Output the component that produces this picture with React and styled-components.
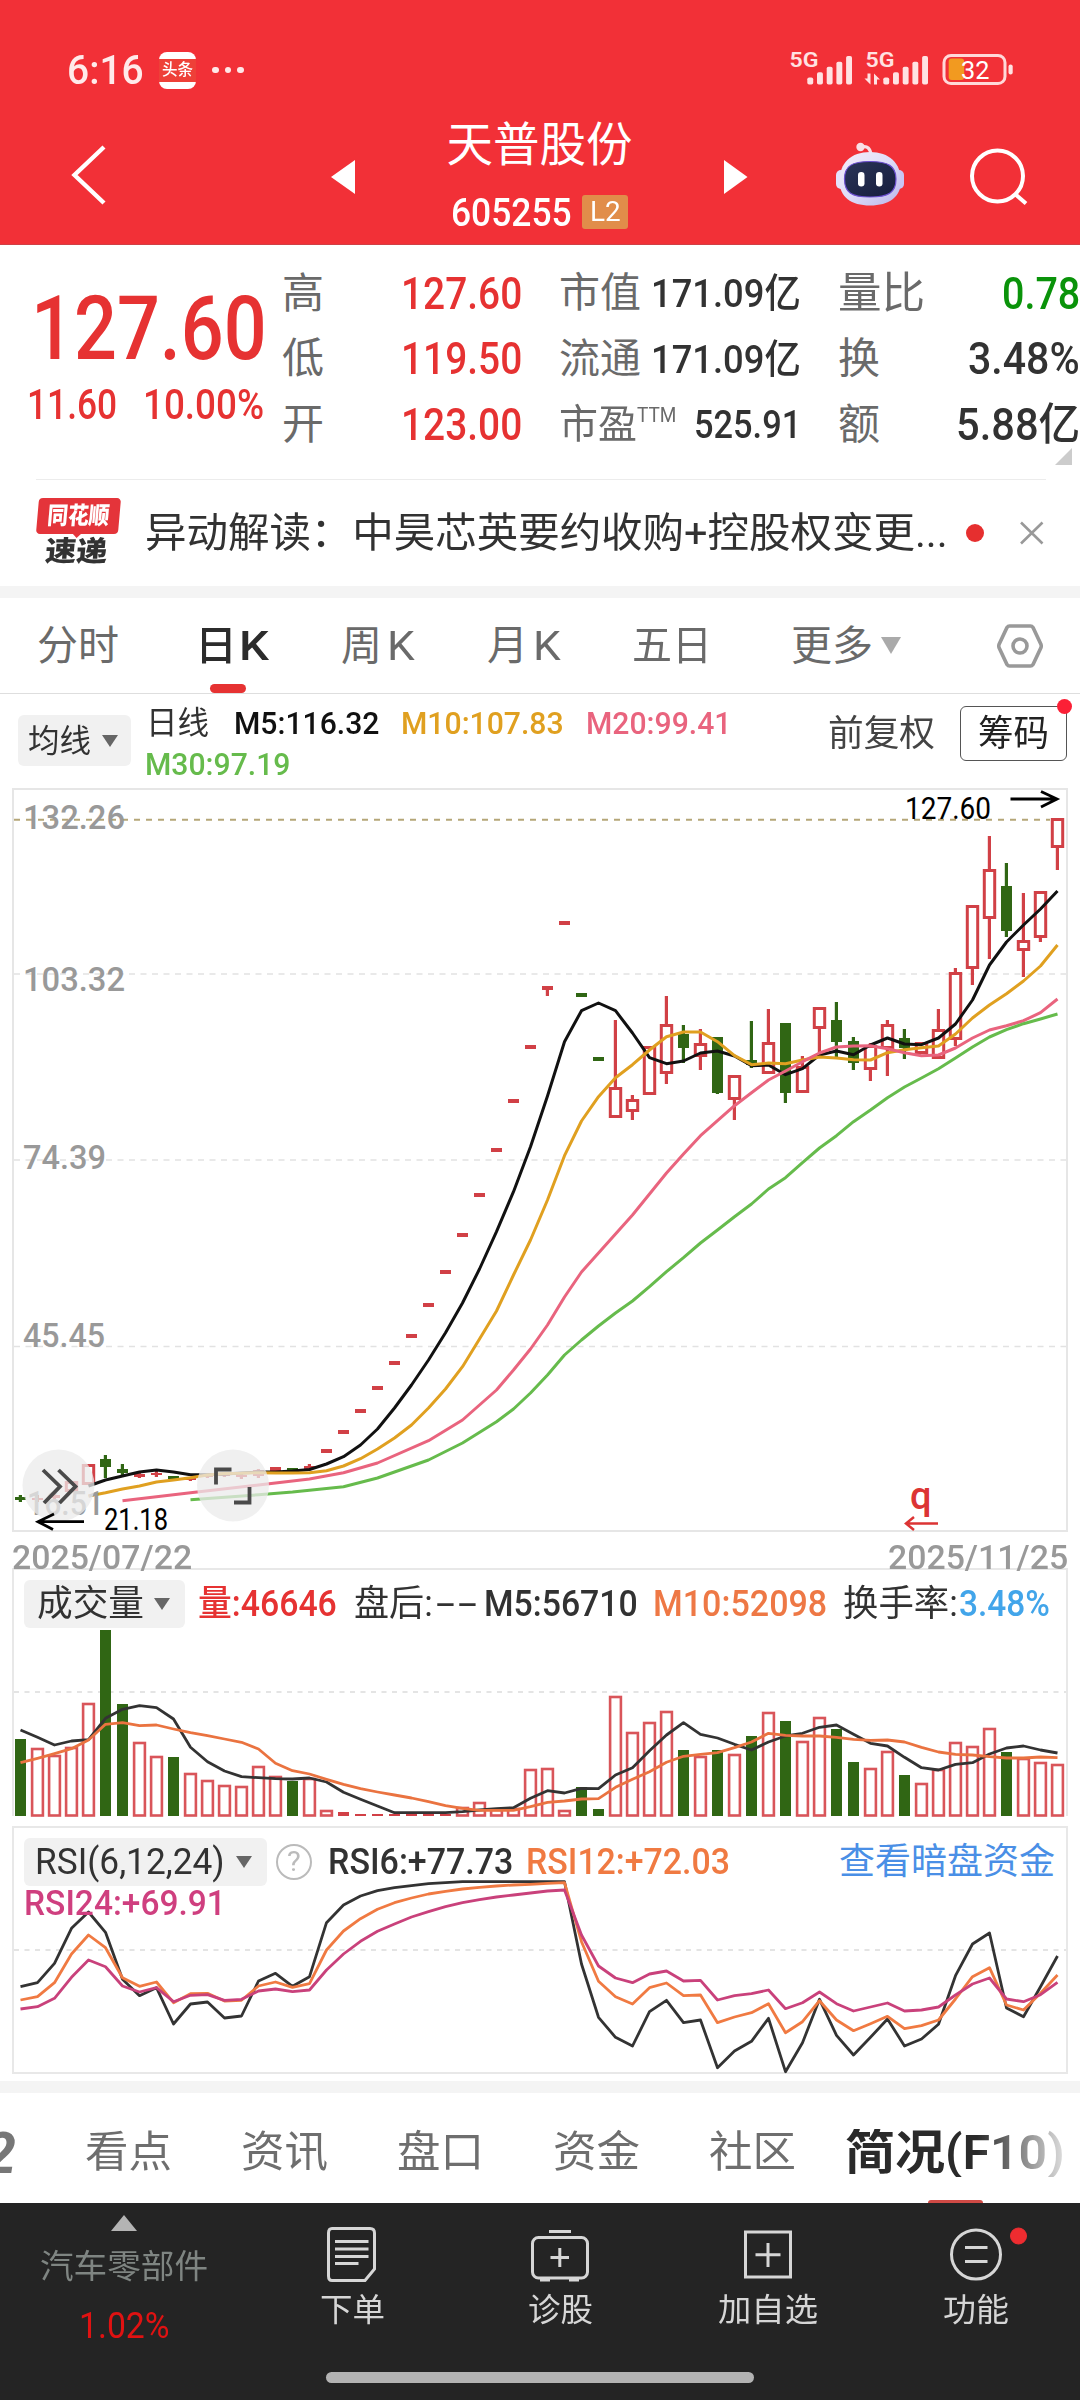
import { useLayoutEffect, useRef, useState } from "react";
import styled, { createGlobalStyle } from "styled-components";

const RED = "#e63232";
const CANDLE_RED = "#d14046";
const CANDLE_GREEN = "#306614";
const FONT = 'Roboto, "Noto Sans CJK SC", sans-serif';

const GlobalStyle = createGlobalStyle`
  body {
    margin: 0;
    background: #fff;
    font-family: ${FONT};
    color: #323232;
  }

  * {
    box-sizing: border-box;
  }
`;

const FitBox = styled.span`
  display: block;
  flex: none;
  width: ${(p) => p.$w}px;
  height: ${(p) => p.$size}px;
  margin-left: ${(p) => p.$ml || 0}px;
  font-size: ${(p) => p.$size}px;
  font-weight: ${(p) => p.$weight || 400};
  color: ${(p) => p.$color || "inherit"};
  line-height: 1;
  white-space: nowrap;
`;

const FitInner = styled.span`
  display: inline-block;
  transform-origin: left center;
`;

// Squeezes a run of text into a fixed width, like the narrow quote font does
function Fit({ w, size, ml, weight, color, children }) {
  const ref = useRef(null);
  const [scale, setScale] = useState(1);

  useLayoutEffect(() => {
    const el = ref.current;
    if (el && el.offsetWidth) setScale(w / el.offsetWidth);
  }, [w, size, weight, children]);

  return (
    <FitBox $w={w} $size={size} $ml={ml} $weight={weight} $color={color}>
      <FitInner ref={ref} style={{ transform: `scaleX(${scale})` }}>
        {children}
      </FitInner>
    </FitBox>
  );
}

const Page = styled.div`
  width: 1080px;
  height: 2400px;
  display: flex;
  flex-direction: column;
  overflow: hidden;
  background: #fff;
`;

/* ---------- header ---------- */

const Header = styled.header`
  height: 245px;
  flex: none;
  background: #f23037;
  border-bottom: 1px solid #d04046;
  color: #fff;
`;

const StatusBar = styled.div`
  display: flex;
  align-items: center;
  height: 110px;
  padding: 30px 64px 0 67px;
`;

const AppBadge = styled.div`
  width: 37px;
  height: 37px;
  margin-left: 15px;
  padding: 7px 0 7px;
  border-radius: 8px;
  background: #fff;
`;

const AppBadgeText = styled.div`
  display: flex;
  justify-content: center;
  align-items: center;
  height: 23px;
  background: #ee4038;
`;

const Dots = styled.div`
  display: flex;
  gap: 6px;
  margin-left: 16px;

  i {
    width: 6.5px;
    height: 6.5px;
    border-radius: 50%;
    background: #ffe8e8;
  }
`;

const StatusIcons = styled.svg`
  margin-left: auto;
`;

const NavBar = styled.div`
  display: flex;
  height: 134px;

  > svg {
    flex: none;
  }
`;

const TitleBlock = styled.div`
  display: flex;
  flex-direction: column;
  align-items: center;
  width: 369px;
  padding-top: 12px;
`;

const CodeRow = styled.div`
  display: flex;
  align-items: center;
  margin-top: 24px;
`;

const LevelTag = styled.div`
  display: flex;
  align-items: center;
  justify-content: center;
  width: 46px;
  height: 34px;
  margin-left: 10px;
  border-radius: 3px;
  background: #e18d4a;
`;

function Robot() {
  return (
    <svg width="72" height="134" viewBox="834 110 72 134">
      <defs>
        <linearGradient id="shell" x1="0" y1="0" x2="1" y2="1">
          <stop offset="0" stopColor="#f6eef8" />
          <stop offset="0.5" stopColor="#dfdcf8" />
          <stop offset="1" stopColor="#b9b4ea" />
        </linearGradient>
        <linearGradient id="visor" x1="0" y1="0" x2="1" y2="1">
          <stop offset="0" stopColor="#2b3558" />
          <stop offset="1" stopColor="#161c3c" />
        </linearGradient>
      </defs>
      <path d="M862 147 Q870 145 871 155" fill="none" stroke="#f7dfe8" strokeWidth="3.2" />
      <circle cx="860.5" cy="147" r="4.2" fill="#f9dfe6" />
      <rect x="836" y="170" width="10" height="19" rx="5" fill="#e4e2fb" />
      <rect x="894" y="170" width="10" height="19" rx="5" fill="#c9c5f4" />
      <path d="M870 152C889 152 901 163 901 181C901 197 889 205.500 870 205.500C851 205.500 839.500 197 839.500 181C839.500 163 851 152 870 152Z" fill="url(#shell)" />
      <path d="M870 161.500C888 161.500 896 166 896 179C896 193 888 197 870 197C852 197 844.500 193 844.500 179C844.500 166 852 161.500 870 161.500Z" fill="url(#visor)" stroke="#6c4fd0" strokeWidth="1.2" />
      <rect x="858" y="172" width="6.5" height="14.5" rx="3.2" fill="#fff" />
      <rect x="876" y="172" width="6.5" height="14.5" rx="3.2" fill="#fff" />
    </svg>
  );
}

function SignalBars({ x }) {
  return [77.5, 72.3, 66.7, 61.7, 56].map((top, i) => (
    <rect key={top} x={x + i * 9.7} y={top} width="5.9" height={84.5 - top} rx="1.8" />
  ));
}

/* ---------- quote ---------- */

const Quote = styled.section`
  display: grid;
  grid-template-columns: 282px 240px 279px 279px;
  height: 234px;
  flex: none;
  position: relative;
  padding-top: 16px;
`;

const PriceCol = styled.div`
  padding: 23px 0 0 27px;
`;

const BigPrice = styled.div`
  padding-left: 4px;
`;

const ChangeRow = styled.div`
  display: flex;
  margin-top: 11px;
`;

const StatCol = styled.div`
  display: grid;
  grid-auto-rows: 65.5px;
  padding-left: ${(p) => p.$pad || 0}px;
`;

const Stat = styled.div`
  display: flex;
  justify-content: space-between;
  align-items: center;
  color: #323232;

  > :first-child {
    color: #6a6a6a;
  }
`;

const LabelGroup = styled.div`
  display: flex;
  align-items: flex-start;
`;

const Corner = styled.i`
  position: absolute;
  right: 8px;
  bottom: 14px;
  border-left: 17px solid transparent;
  border-bottom: 17px solid #ccc;
`;

const NewsRow = styled.section`
  display: flex;
  align-items: center;
  height: 107px;
  flex: none;
  margin: 0 34px 0 36px;
  border-top: 1px solid #ececec;

  > svg {
    flex: none;
  }
`;

const NewsLogo = styled.div`
  width: 82px;
  height: 70px;
  margin-top: -1px;
  transform: skewX(-5deg);
`;

const NewsLogoTop = styled.div`
  display: flex;
  justify-content: center;
  align-items: center;
  height: 36px;
  border-radius: 4px;
  background: #e4343a;
  color: #fff;
`;

const NewsLogoTail = styled.i`
  display: block;
  width: 0;
  margin: -1px auto 0;
  border: 5px solid transparent;
  border-top-color: #e4343a;
  border-bottom: 0;
`;

const NewsDot = styled.i`
  flex: none;
  width: 18px;
  height: 18px;
  margin-left: 18px;
  border-radius: 50%;
  background: #e62f2f;
`;

const Band = styled.div`
  height: 12px;
  flex: none;
  background: #f4f4f4;
`;

const SpacedBand = styled(Band)`
  margin-top: 7px;
`;

/* ---------- period tabs ---------- */

const PeriodTabs = styled.nav`
  display: flex;
  align-items: center;
  height: 96px;
  flex: none;
  padding-left: 37px;
  border-bottom: 1px solid #dedede;
  color: #6a6a6a;

  > svg {
    flex: none;
  }
`;

const PeriodTab = styled.div`
  display: flex;
  position: relative;
  padding-top: 1px;
  margin-left: ${(p) => p.$ml || 0}px;
  color: ${(p) => (p.$active ? "#2c2c2c" : "inherit")};

  &::after {
    content: "";
    display: ${(p) => (p.$active ? "block" : "none")};
    position: absolute;
    left: 15px;
    top: 59px;
    width: 36px;
    height: 9px;
    border-radius: 5px;
    background: #e63232;
  }
`;

const Caret = styled.i`
  flex: none;
  width: 0;
  margin-left: ${(p) => p.$ml}px;
  border: ${(p) => p.$half || 8.5}px solid transparent;
  border-top: ${(p) => p.$h || 12}px solid ${(p) => p.$color || "#666"};
  border-bottom: 0;
`;

const MaRow = styled.div`
  display: flex;
  height: 94px;
  flex: none;
  padding-left: 18px;
`;

const Picker = styled.div`
  display: flex;
  align-items: center;
  flex: none;
  width: ${(p) => p.$w}px;
  height: ${(p) => p.$h}px;
  margin-top: ${(p) => p.$mt || 0}px;
  border-radius: 6px;
  background: #f1f1f1;
`;

const MaLegend = styled.div`
  width: 681px;
  flex: none;
  padding: 13px 0 0 15px;
`;

const LegendLine = styled.div`
  display: flex;
  height: 41px;
`;

const MaActions = styled.div`
  display: flex;
`;

const AdjustLabel = styled.div`
  margin: 22px 0 0 16px;
`;

const ChipButton = styled.div`
  position: relative;
  display: flex;
  align-items: center;
  justify-content: center;
  width: 107px;
  height: 55px;
  margin: 12px 0 0 25px;
  border: 1.5px solid #555;
  border-radius: 6px;
  color: #222;

  &::after {
    content: "";
    position: absolute;
    right: -6px;
    top: -8px;
    width: 15px;
    height: 15px;
    border-radius: 50%;
    background: #fb2036;
  }
`;

/* ---------- charts ---------- */

const ChartPanel = styled.section`
  display: grid;
  height: ${(p) => p.$h}px;
  flex: none;

  > * {
    grid-area: 1 / 1;
  }

  polyline {
    fill: none;
    stroke-linejoin: round;
  }
`;

const DateRow = styled.div`
  display: flex;
  justify-content: space-between;
  align-items: center;
  height: 36px;
  flex: none;
  padding: 14px 12px 0;
  color: #999;
  z-index: 1;
`;

const PanelLegend = styled.div`
  padding: 12px 0 0 24px;
`;

const PanelLegendRow = styled.div`
  display: flex;
  align-items: center;
`;

const Help = styled.div`
  display: flex;
  align-items: center;
  justify-content: center;
  width: 36px;
  height: 36px;
  margin-left: 9px;
  border: 2.5px solid #bbb;
  border-radius: 50%;
`;

const xAt = (i) => 20.5 + i * 17;

const line = (points) => points.map(([i, y]) => `${xAt(i)},${y}`).join(" ");
const series = (ys, base) => ys.map((v, i) => `${xAt(i)},${(base + v / 3).toFixed(1)}`).join(" ");

// [up, body top, body bottom, wick top, wick bottom]
const candles = [
  [0, 1497, 1500, 1495, 1502], [1, 1498, 1500, 1495, 1502], [1, 1495, 1498, 1493, 1501],
  [1, 1481, 1492, 1481, 1492], [1, 1464, 1485, 1464, 1485], [0, 1459, 1467, 1455, 1478],
  [0, 1469, 1473, 1464, 1475], [1, 1474, 1477, 1472, 1478], [1, 1473, 1475, 1469, 1477],
  [0, 1476, 1479, 1476, 1479], [1, 1477, 1480, 1477, 1481], [1, 1475, 1477, 1474, 1478],
  [1, 1474, 1476, 1474, 1477], [1, 1475, 1477, 1474, 1479], [1, 1470, 1476, 1469, 1478],
  [1, 1467, 1471, 1467, 1471], [0, 1468, 1471, 1468, 1471], [1, 1466, 1469, 1464, 1470],
  [1, 1449, 1453], [1, 1430, 1434], [1, 1409, 1413], [1, 1386, 1390], [1, 1361, 1365],
  [1, 1334, 1338], [1, 1303, 1307], [1, 1270, 1274], [1, 1233, 1237], [1, 1193, 1197],
  [1, 1148, 1152], [1, 1099, 1103], [1, 1045, 1049], [1, 986, 990, 986, 996],
  [1, 921, 925], [0, 993, 997], [0, 1057, 1061],
  [1, 1087, 1118, 1020, 1118], [1, 1099, 1112, 1095, 1120], [1, 1046, 1095, 1046, 1095],
  [1, 1024, 1074, 996, 1084], [0, 1034, 1048, 1025, 1063], [1, 1043, 1057, 1029, 1070],
  [0, 1037, 1093, 1037, 1094], [1, 1075, 1100, 1075, 1120], [0, 1060, 1065, 1021, 1068],
  [1, 1042, 1074, 1009, 1074], [0, 1023, 1093, 1023, 1103], [1, 1066, 1093, 1056, 1093],
  [1, 1007, 1029, 1007, 1057], [0, 1020, 1042, 1002, 1057], [0, 1041, 1063, 1037, 1070],
  [1, 1045, 1070, 1043, 1081], [1, 1024, 1049, 1020, 1076], [0, 1038, 1048, 1029, 1059],
  [1, 1042, 1054, 1042, 1054], [1, 1029, 1059, 1009, 1059], [1, 972, 1040, 968, 1046],
  [1, 905, 969, 905, 985], [1, 869, 919, 836, 959], [0, 886, 931, 863, 937],
  [1, 940, 951, 893, 977], [1, 891, 938, 891, 942], [1, 818, 848, 818, 870],
];

const ma5 = [
  1486, 1480, 1476, 1472, 1470, 1472, 1474.7, 1474.7, 1474, 1473, 1472, 1472, 1471, 1469.5, 1464,
  1456.7, 1445, 1429, 1408, 1385, 1360, 1332.7, 1303, 1269, 1231.7, 1191.7, 1146.7, 1096, 1041.7,
  1010.7, 1003, 1010.7, 1033, 1057.7, 1063.7, 1061, 1053, 1051, 1056, 1065.7, 1065, 1074.7, 1068.7,
  1055, 1051, 1054.7, 1045, 1038, 1044, 1044.7, 1038, 1024, 1000, 965, 942, 925, 909, 891,
].map((y, k) => [k + 4, y]);

const ma10 = [
  1496, 1492.7, 1489, 1486, 1482, 1480, 1477.7, 1475, 1473.5, 1473.3, 1472.7, 1473, 1473, 1472.7,
  1470.7, 1466, 1458.7, 1449, 1438, 1425, 1408, 1389, 1366.7, 1339, 1311, 1275, 1240, 1200, 1155.7,
  1121, 1096.7, 1077.7, 1064.7, 1050, 1036.7, 1032, 1032, 1041.7, 1055.7, 1064.7, 1063, 1063.7,
  1060, 1057, 1058, 1059.7, 1060, 1052.7, 1049.7, 1047.7, 1046, 1034, 1018, 1005, 993.7, 981, 966,
  945,
].map((y, k) => [k + 4, y]);

const ma20 = [
  [6, 1500.7], [10, 1492.7], [14, 1485], [17, 1479], [19, 1472.7], [21, 1463], [24, 1440.7],
  [26, 1420], [27, 1405], [28, 1390], [29, 1370], [30, 1349], [31, 1325], [32, 1297], [33, 1272],
  [34, 1253], [35, 1234], [36, 1215], [37, 1194], [38, 1173], [39, 1154], [40, 1135.7],
  [41, 1120.7], [42, 1105.7], [43, 1092.7], [44, 1080], [45, 1071], [46, 1061.7], [47, 1053],
  [48, 1047], [49, 1046], [50, 1045.7], [51, 1048.7], [52, 1052.7], [53, 1055.7], [54, 1055],
  [55, 1048], [56, 1038], [57, 1030], [58, 1025.7], [59, 1020.7], [60, 1012.7], [61, 999],
];

const ma30 = [
  [10, 1499.7], [14, 1494.7], [16, 1492], [19, 1486.7], [21, 1478], [24, 1460], [26, 1443],
  [28, 1421.7], [29, 1409], [30, 1393], [31, 1375], [32, 1355], [33, 1340], [34, 1326], [35, 1313],
  [36, 1301], [37, 1286.7], [38, 1271.7], [39, 1257.7], [40, 1243], [41, 1230], [42, 1216.7],
  [43, 1204], [44, 1189], [45, 1177.7], [46, 1162.7], [47, 1148], [48, 1135.7], [49, 1121.7],
  [50, 1110], [51, 1097.7], [52, 1087], [53, 1078], [54, 1068.7], [55, 1058], [56, 1047],
  [57, 1037], [58, 1029.7], [59, 1023.7], [60, 1019], [61, 1014],
];

const volumeTops = [
  1740, 1749, 1756, 1748, 1704, 1631, 1705, 1743, 1757, 1758, 1774, 1781, 1786, 1787, 1767, 1777,
  1782, 1779, 1811, 1813, 1815, 1815, 1815, 1815, 1815, 1815, 1808, 1803, 1810, 1809, 1770, 1769,
  1811, 1788, 1810, 1697, 1733, 1723, 1712, 1751, 1757, 1751, 1755, 1737, 1713, 1722, 1742, 1718,
  1730, 1763, 1769, 1752, 1776, 1784, 1770, 1743, 1747, 1729, 1753, 1759, 1763, 1765,
];

const volMa5 = [
  570, 592, 615, 603, 599, 535, 508, 497, 503, 537, 622, 665, 693, 710, 713, 716, 717, 714, 726,
  757, 778, 798, 818, 818, 818, 818, 815, 810, 806, 803, 775, 752, 759, 745, 746, 705, 683, 632,
  585, 548, 583, 594, 613, 630, 606, 588, 580, 562, 555, 583, 610, 618, 652, 683, 690, 673, 668,
  642, 624, 618, 630, 639,
];

const volMa10 = [
  668, 655, 641, 626, 600, 553, 548, 557, 555, 567, 578, 587, 597, 607, 627, 670, 692, 702, 718,
  733, 746, 756, 765, 774, 785, 797, 805, 811, 811, 811, 800, 787, 783, 777, 776, 742, 718, 695,
  667, 649, 643, 638, 623, 606, 580, 586, 588, 588, 592, 598, 601, 600, 606, 622, 636, 643, 645,
  650, 654, 654, 651, 653,
];

const rsi6 = [
  500, 488, 430, 325, 276, 337, 478, 527, 503, 612, 552, 546, 594, 588, 483, 460, 499, 470, 308,
  255, 228, 212, 203, 197, 191, 188, 185, 185, 185, 185, 185, 185, 185, 432, 592, 652, 678, 575,
  541, 608, 600, 743, 693, 664, 595, 755, 668, 538, 646, 705, 652, 597, 678, 657, 613, 467, 372,
  339, 564, 590, 500, 408,
];

const rsi12 = [
  540, 530, 488, 402, 345, 383, 473, 499, 486, 548, 521, 520, 543, 541, 498, 486, 502, 491, 390,
  333, 296, 268, 248, 234, 222, 214, 207, 202, 198, 195, 193, 190, 188, 365, 484, 530, 552, 503,
  489, 527, 525, 608, 591, 578, 551, 638, 605, 542, 600, 632, 611, 589, 626, 617, 600, 537, 470,
  443, 555, 570, 520, 465,
];

const rsi24 = [
  567, 560, 535, 472, 420, 440, 498, 516, 503, 545, 526, 524, 541, 538, 513, 507, 515, 510, 450,
  402, 364, 334, 312, 291, 275, 260, 248, 239, 231, 225, 219, 213, 210, 345, 438, 474, 488, 462,
  453, 483, 481, 540, 527, 521, 510, 566, 548, 516, 551, 573, 561, 549, 573, 570, 561, 525, 492,
  474, 537, 545, 524, 487,
];

function Candle({ x, data }) {
  const [up, top, bottom, wickTop, wickBottom] = data;
  const color = up ? CANDLE_RED : CANDLE_GREEN;
  const flat = bottom - top < 8;
  return (
    <g>
      {wickTop !== undefined && wickTop < top && (
        <rect x={x - 1.7} y={wickTop} width="3.2" height={top - wickTop} fill={color} />
      )}
      {wickBottom !== undefined && wickBottom > bottom && (
        <rect x={x - 1.7} y={bottom} width="3.2" height={wickBottom - bottom} fill={color} />
      )}
      {up && !flat ? (
        <rect x={x - 5.2} y={top + 1.5} width="10.4" height={bottom - top - 3} fill="none" stroke={color} strokeWidth="3" />
      ) : (
        <rect x={x - 5.5} y={top} width="11" height={bottom - top} fill={color} />
      )}
    </g>
  );
}

function AxisText({ x, y, w, children }) {
  return (
    <text x={x} y={y} fontSize="34" fontWeight="500" fill="#999" textLength={w} lengthAdjust="spacingAndGlyphs">
      {children}
    </text>
  );
}

function KLineChart() {
  return (
    <svg width="1080" height="744" viewBox="0 788 1080 744" fontFamily={FONT}>
      <rect x="13" y="789" width="1054" height="742" fill="none" stroke="#e6e6e6" strokeWidth="2" />
      {[974, 1160, 1346.5].map((y) => (
        <path key={y} d={`M14 ${y}H1066`} stroke="#e2e2e2" strokeWidth="1.5" strokeDasharray="6 5.5" />
      ))}
      <path d="M14 819.8H1050" stroke="#b5a678" strokeWidth="2" strokeDasharray="6 6" />
      {candles.map((c, i) => (
        <Candle key={i} x={xAt(i)} data={c} />
      ))}
      <g strokeWidth="3">
        <polyline points={line(ma5)} stroke="#111" />
        <polyline points={line(ma10)} stroke="#e0a020" />
        <polyline points={line(ma20)} stroke="#e9647e" />
        <polyline points={line(ma30)} stroke="#66bb4c" />
      </g>
      <AxisText x={23} y={829} w={102}>132.26</AxisText>
      <AxisText x={23} y={991} w={102}>103.32</AxisText>
      <AxisText x={23} y={1169} w={83}>74.39</AxisText>
      <AxisText x={23} y={1347} w={82}>45.45</AxisText>
      <AxisText x={27} y={1515} w={77}>16.51</AxisText>
      <g fill="#ebebeb" fillOpacity="0.75">
        <circle cx="58.5" cy="1485.5" r="36" />
        <circle cx="233" cy="1485.5" r="36" />
      </g>
      <g fill="none" stroke="#4a4a4a" strokeWidth="3.8">
        <path d="M43 1470L60 1486.5L44 1503M58.5 1470L75.5 1486.5L59.5 1503" />
        <path d="M216 1484.5V1469.5H231.5M249.5 1487V1502.5H234" />
      </g>
      <g fill="none" stroke="#000" strokeWidth="2.8">
        <path d="M1010.5 799H1057M1041 791.5L1057 799L1041 807" />
        <path d="M84 1521.7H38M54 1514L38 1521.7L53 1529.5" />
      </g>
      <text x="905" y="819" fontSize="31" textLength="86" lengthAdjust="spacingAndGlyphs">127.60</text>
      <text x="104" y="1529.5" fontSize="31" textLength="64" lengthAdjust="spacingAndGlyphs">21.18</text>
      <text x="910" y="1509" fontSize="38" fontWeight="500" fill="#dc3434">q</text>
      <path d="M938 1523.5H906M914 1517L906 1523.5L914 1530" fill="none" stroke="#dc3434" strokeWidth="2.5" />
    </svg>
  );
}

function VolumeChart() {
  return (
    <svg width="1080" height="258" viewBox="0 1568 1080 258">
      <path d="M13 1816V1569H1067V1816" fill="none" stroke="#e8e8e8" strokeWidth="2" />
      <path d="M14 1692H1066" stroke="#e4e4e4" strokeWidth="2" strokeDasharray="5 5.5" />
      {volumeTops.map((top, i) => {
        const x = xAt(i);
        const up = candles[i][0];
        if (up && top < 1812) {
          return (
            <rect key={i} x={x - 5.4} y={top} width="10.8" height={1815.5 - top} fill="none" stroke="#d9555a" strokeWidth="2.6" />
          );
        }
        return <rect key={i} x={x - 5.5} y={top - 1} width="11" height={1817 - top} fill={up ? CANDLE_RED : CANDLE_GREEN} />;
      })}
      <g strokeWidth="2.8">
        <polyline points={series(volMa5, 1540)} stroke="#333" />
        <polyline points={series(volMa10, 1540)} stroke="#ea7340" />
      </g>
    </svg>
  );
}

function RsiChart() {
  return (
    <svg width="1080" height="248" viewBox="0 1826 1080 248">
      <rect x="13" y="1827" width="1054" height="246" fill="none" stroke="#e8e8e8" strokeWidth="2" />
      <path d="M14 1950H1066" stroke="#e4e4e4" strokeWidth="2" strokeDasharray="5 5.5" />
      <g strokeWidth="2.8">
        <polyline points={series(rsi6, 1820)} stroke="#333" />
        <polyline points={series(rsi12, 1820)} stroke="#f07a42" />
        <polyline points={series(rsi24, 1820)} stroke="#c9417b" />
      </g>
    </svg>
  );
}

/* ---------- bottom ---------- */

const SubTabs = styled.nav`
  display: flex;
  align-items: center;
  position: relative;
  height: 110px;
  flex: none;
  padding-top: 9px;
  color: #6e6e6e;
`;

const CutTab = styled.div`
  display: flex;
  justify-content: flex-end;
  width: 16px;
  height: 58px;
  overflow: hidden;
  font-size: 58px;
  font-weight: 700;
  font-style: italic;
  line-height: 1;
  color: #777;
`;

const ActiveSubTab = styled.div`
  margin-left: 49px;
  color: #2a2a2a;
  mask-image: linear-gradient(90deg, #000 60%, rgba(0, 0, 0, 0.15) 100%);
`;

const SubTabMark = styled.i`
  position: absolute;
  left: 928px;
  bottom: 0;
  width: 55px;
  height: 3px;
  border-radius: 3px 3px 0 0;
  background: #d04a45;
`;

const BottomBar = styled.footer`
  display: flex;
  flex-direction: column;
  height: 197px;
  flex: none;
  background: #242424;
  color: #d6d6d6;
`;

const BottomItems = styled.div`
  display: grid;
  grid-template-columns: 248px 208px 208px 208px 208px;
  height: 169px;
`;

const SectorItem = styled.div`
  display: flex;
  flex-direction: column;
  align-items: center;
  padding-top: 12px;
`;

const SectorArrow = styled.i`
  width: 0;
  border: 13.5px solid transparent;
  border-bottom: 16px solid #b4b4b4;
  border-top: 0;
`;

const SectorName = styled.div`
  margin: 19px 0 25px;
`;

const BottomItem = styled.div`
  display: flex;
  flex-direction: column;
  align-items: center;
  gap: 8px;
  padding-top: 19px;

  svg {
    fill: none;
    stroke: #d6d6d6;
    stroke-width: 3;
  }
`;

const HomeBar = styled.i`
  width: 428px;
  height: 11px;
  margin: 0 auto;
  border-radius: 6px;
  background: #b3b3b3;
`;

export default function App() {
  return (
    <Page>
      <GlobalStyle />

      <Header>
        <StatusBar>
          <Fit w={77} size={41} weight={500} color="#ffeaea">6:16</Fit>
          <AppBadge>
            <AppBadgeText>
              <Fit w={31} size={16} weight={500}>头条</Fit>
            </AppBadgeText>
          </AppBadge>
          <Dots>
            <i />
            <i />
            <i />
          </Dots>
          <StatusIcons width="228" height="60" viewBox="788 40 228 60" fill="#ffe2e2" fontFamily={FONT}>
            <text x="789.5" y="67" fontSize="21" fontWeight="600" textLength="29" lengthAdjust="spacingAndGlyphs">5G</text>
            <SignalBars x={807.3} />
            <text x="865.5" y="67" fontSize="21" fontWeight="600" textLength="29" lengthAdjust="spacingAndGlyphs">5G</text>
            <path d="M870.5 73.5V84.5L864.5 78.5H867.5V73.5ZM874 84.5V73.5L880 79.5H877V84.5Z" />
            <SignalBars x={883.3} />
            <rect x="944" y="55.5" width="61" height="28" rx="7" fill="none" stroke="#ffd9d9" strokeWidth="3" />
            <rect x="948.7" y="58.5" width="15.5" height="21.5" rx="3" fill="#f29a20" />
            <rect x="1008.5" y="64.5" width="4.2" height="10" rx="2" />
            <text x="961" y="79.2" fontSize="26.5" fill="#fff" textLength="28.5" lengthAdjust="spacingAndGlyphs">32</text>
          </StatusIcons>
        </StatusBar>
        <NavBar>
          <svg width="355" height="134" viewBox="0 110 355 134">
            <path d="M104 147L74.5 175L104 203" fill="none" stroke="#fff" strokeWidth="4.4" />
            <path d="M355 160V194L331 177Z" fill="#fff" />
          </svg>
          <TitleBlock>
            <Fit w={186} size={46.5}>天普股份</Fit>
            <CodeRow>
              <Fit w={121} size={39.5} weight={500}>605255</Fit>
              <LevelTag>
                <Fit w={31} size={27}>L2</Fit>
              </LevelTag>
            </CodeRow>
          </TitleBlock>
          <svg width="110" height="134" viewBox="724 110 110 134">
            <path d="M724 160V194L747.5 177Z" fill="#fff" />
          </svg>
          <Robot />
          <svg width="174" height="134" viewBox="906 110 174 134" fill="none" stroke="#fff" strokeWidth="4">
            <circle cx="997.5" cy="176" r="25.5" />
            <path d="M1015 194L1026 203.5" />
          </svg>
        </NavBar>
      </Header>

      <Quote>
        <PriceCol>
          <BigPrice>
            <Fit w={236} size={89} weight={500} color={RED}>127.60</Fit>
          </BigPrice>
          <ChangeRow>
            <Fit w={90} size={42} color={RED} weight={500}>11.60</Fit>
            <Fit w={121} size={42} ml={26} color={RED} weight={500}>10.00%</Fit>
          </ChangeRow>
        </PriceCol>
        <StatCol>
          <Stat>
            <Fit w={42} size={42}>高</Fit>
            <Fit w={121} size={44} weight={500} color={RED}>127.60</Fit>
          </Stat>
          <Stat>
            <Fit w={42} size={42}>低</Fit>
            <Fit w={121} size={44} weight={500} color={RED}>119.50</Fit>
          </Stat>
          <Stat>
            <Fit w={42} size={42}>开</Fit>
            <Fit w={121} size={44} weight={500} color={RED}>123.00</Fit>
          </Stat>
        </StatCol>
        <StatCol $pad={37}>
          <Stat>
            <Fit w={82} size={41}>市值</Fit>
            <Fit w={150} size={39.5} weight={500}>171.09亿</Fit>
          </Stat>
          <Stat>
            <Fit w={82} size={41}>流通</Fit>
            <Fit w={150} size={39.5} weight={500}>171.09亿</Fit>
          </Stat>
          <Stat>
            <LabelGroup>
              <Fit w={78} size={40}>市盈</Fit>
              <Fit w={39} size={20}>TTM</Fit>
            </LabelGroup>
            <Fit w={107} size={39.5} weight={500}>525.91</Fit>
          </Stat>
        </StatCol>
        <StatCol $pad={37}>
          <Stat>
            <Fit w={87} size={43}>量比</Fit>
            <Fit w={78} size={44} weight={500} color="#0a930a">0.78</Fit>
          </Stat>
          <Stat>
            <Fit w={42} size={42}>换</Fit>
            <Fit w={112} size={44} weight={500}>3.48%</Fit>
          </Stat>
          <Stat>
            <Fit w={42} size={42}>额</Fit>
            <Fit w={124} size={44} weight={500}>5.88亿</Fit>
          </Stat>
        </StatCol>
        <Corner />
      </Quote>

      <NewsRow>
        <NewsLogo>
          <NewsLogoTop>
            <Fit w={62} size={24} weight={900}>同花顺</Fit>
          </NewsLogoTop>
          <NewsLogoTail />
          <Fit w={62} size={28} ml={11} weight={900} color="#333">速递</Fit>
        </NewsLogo>
        <Fit w={803} size={41} ml={27}>异动解读：中昊芯英要约收购+控股权变更...</Fit>
        <NewsDot />
        <svg width="60" height="24" viewBox="0 0 60 24">
          <path d="M37 1.5L58.5 22.5M58.5 1.5L37 22.5" stroke="#999" strokeWidth="2.6" />
        </svg>
      </NewsRow>

      <Band />

      <PeriodTabs>
        <PeriodTab>
          <Fit w={82} size={41}>分时</Fit>
        </PeriodTab>
        <PeriodTab $ml={76} $active>
          <Fit w={42} size={41} weight={500}>日</Fit>
          <Fit w={30} size={41} ml={2} weight={500}>K</Fit>
        </PeriodTab>
        <PeriodTab $ml={72}>
          <Fit w={41} size={41}>周</Fit>
          <Fit w={28} size={41} ml={5}>K</Fit>
        </PeriodTab>
        <PeriodTab $ml={72}>
          <Fit w={41} size={41}>月</Fit>
          <Fit w={28} size={41} ml={5}>K</Fit>
        </PeriodTab>
        <PeriodTab $ml={71}>
          <Fit w={80} size={41}>五日</Fit>
        </PeriodTab>
        <PeriodTab $ml={79}>
          <Fit w={82} size={41}>更多</Fit>
        </PeriodTab>
        <Caret $ml={8} $half={10.5} $h={17} $color="#aaa" />
        <svg width="142" height="48" viewBox="-2 0 142 48" fill="none" stroke="#999" strokeWidth="3.6">
          <path d="M106.500 4H127.500Q129 4 130 5.500L138 22.500Q138.500 24 138 25.500L130 42.500Q129 44 127.500 44H106.500Q105 44 104 42.500L96 25.500Q95.500 24 96 22.500L104 5.500Q105 4 106.500 4Z" />
          <circle cx="117" cy="24" r="7" />
        </svg>
      </PeriodTabs>

      <MaRow>
        <Picker $w={113} $h={51} $mt={21}>
          <Fit w={63} size={32} ml={10}>均线</Fit>
          <Caret $ml={11} />
        </Picker>
        <MaLegend>
          <LegendLine>
            <Fit w={63} size={32}>日线</Fit>
            <Fit w={145} size={32} ml={25} weight={500} color="#111">M5:116.32</Fit>
            <Fit w={163} size={32} ml={22} weight={500} color="#e0a020">M10:107.83</Fit>
            <Fit w={145} size={32} ml={22} weight={500} color="#e9647e">M20:99.41</Fit>
          </LegendLine>
          <LegendLine>
            <Fit w={145} size={32} ml={-1} weight={500} color="#66bb4c">M30:97.19</Fit>
          </LegendLine>
        </MaLegend>
        <MaActions>
          <AdjustLabel>
            <Fit w={107} size={36} color="#444">前复权</Fit>
          </AdjustLabel>
          <ChipButton>
            <Fit w={71} size={36}>筹码</Fit>
          </ChipButton>
        </MaActions>
      </MaRow>

      <ChartPanel $h={744}>
        <KLineChart />
      </ChartPanel>

      <DateRow>
        <Fit w={180} size={34} weight={500}>2025/07/22</Fit>
        <Fit w={180} size={34} weight={500}>2025/11/25</Fit>
      </DateRow>

      <ChartPanel $h={258}>
        <VolumeChart />
        <PanelLegend>
          <PanelLegendRow>
            <Picker $w={161} $h={48}>
              <Fit w={107} size={36} ml={13}>成交量</Fit>
              <Caret $ml={10} />
            </Picker>
            <Fit w={139} size={36} ml={13} weight={500} color={RED}>量:46646</Fit>
            <Fit w={79} size={36} ml={17}>盘后:</Fit>
            <Fit w={19} size={36} ml={3}>-</Fit>
            <Fit w={19} size={36} ml={3}>-</Fit>
            <Fit w={154} size={36} ml={7} weight={500}>M5:56710</Fit>
            <Fit w={174} size={36} ml={15} weight={500} color="#ee7845">M10:52098</Fit>
            <Fit w={115} size={36} ml={16}>换手率:</Fit>
            <Fit w={91} size={36} ml={1} weight={500} color="#42a5ea">3.48%</Fit>
          </PanelLegendRow>
        </PanelLegend>
      </ChartPanel>

      <ChartPanel $h={248}>
        <RsiChart />
        <PanelLegend>
          <PanelLegendRow>
            <Picker $w={243} $h={48}>
              <Fit w={190} size={36} ml={11}>RSI(6,12,24)</Fit>
              <Caret $ml={11} />
            </Picker>
            <Help>
              <Fit w={14} size={27} color="#bbb">?</Fit>
            </Help>
            <Fit w={185} size={36} ml={16} weight={500}>RSI6:+77.73</Fit>
            <Fit w={204} size={36} ml={13} weight={500} color="#f07a42">RSI12:+72.03</Fit>
            <Fit w={216} size={36} ml={109} color="#4a8fe6">查看暗盘资金</Fit>
          </PanelLegendRow>
          <Fit w={202} size={35} weight={500} color="#cf3f7f">RSI24:+69.91</Fit>
        </PanelLegend>
      </ChartPanel>

      <SpacedBand />

      <SubTabs>
        <CutTab>2</CutTab>
        <Fit w={87} size={43} ml={69}>看点</Fit>
        <Fit w={87} size={43} ml={69}>资讯</Fit>
        <Fit w={87} size={43} ml={69}>盘口</Fit>
        <Fit w={87} size={43} ml={69}>资金</Fit>
        <Fit w={87} size={43} ml={69}>社区</Fit>
        <ActiveSubTab>
          <Fit w={220} size={48} weight={600}>简况(F10)</Fit>
        </ActiveSubTab>
        <SubTabMark />
      </SubTabs>

      <BottomBar>
        <BottomItems>
          <SectorItem>
            <SectorArrow />
            <SectorName>
              <Fit w={168} size={33} color="#7f8582">汽车零部件</Fit>
            </SectorName>
            <Fit w={91} size={36} color="#e01212">1.02%</Fit>
          </SectorItem>
          <BottomItem>
            <svg width="60" height="64" viewBox="323 2222 60 64">
              <path d="M333 2228.500H371Q375.500 2228.500 375.500 2233V2269L366 2280.500H333Q329.500 2280.500 329.500 2276V2233Q329.500 2228.500 333 2228.500Z" />
              <path d="M336 2241.500H369.500M336 2249H369.500M336 2256.500H369.500M336 2263.500H359.500" />
            </svg>
            <Fit w={65} size={32}>下单</Fit>
          </BottomItem>
          <BottomItem>
            <svg width="60" height="64" viewBox="530 2222 60 64">
              <rect x="532.500" y="2237.500" width="55" height="40.500" rx="6" />
              <path d="M549 2231.500H571M559.800 2248V2267M550.500 2257.500H569M540 2280H550M569 2280H579" />
            </svg>
            <Fit w={65} size={32}>诊股</Fit>
          </BottomItem>
          <BottomItem>
            <svg width="60" height="64" viewBox="737.5 2222 60 64">
              <rect x="745" y="2232" width="45" height="45" />
              <path d="M767.500 2243V2267M755 2254.800H780" />
            </svg>
            <Fit w={100} size={32}>加自选</Fit>
          </BottomItem>
          <BottomItem>
            <svg width="110" height="64" viewBox="920.5 2222 110 64">
              <circle cx="975.5" cy="2254.5" r="24.5" />
              <path d="M964.500 2247.500H987M964.500 2261.500H987" />
              <circle cx="1018" cy="2236" r="8" fill="#ee2c30" stroke="#ee2c30" strokeWidth="1" />
            </svg>
            <Fit w={66} size={32}>功能</Fit>
          </BottomItem>
        </BottomItems>
        <HomeBar />
      </BottomBar>
    </Page>
  );
}
